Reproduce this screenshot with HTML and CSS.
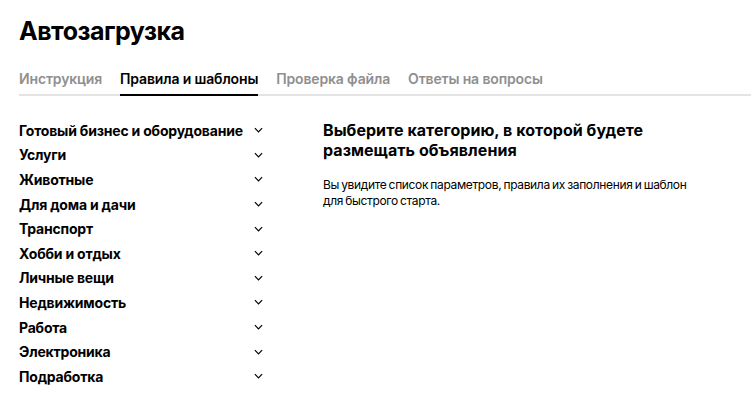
FILE: index.html
```html
<!DOCTYPE html>
<html lang="ru">
<head>
<meta charset="utf-8">
<link rel="stylesheet" href="styles.css">
</head>
<body>
<div class="page">
  <h1 class="title">Автозагрузка</h1>
  <nav class="tabs">
    <a class="tab">Инструкция</a>
    <a class="tab active">Правила и шаблоны</a>
    <a class="tab">Проверка файла</a>
    <a class="tab">Ответы на вопросы</a>
  </nav>
  <div class="content">
    <ul class="cats">
      <li class="cat"><span>Готовый бизнес и оборудование</span><svg class="chev" viewBox="0 0 10 6"><path d="M1 1l4 4 4-4"/></svg></li>
      <li class="cat"><span>Услуги</span><svg class="chev" viewBox="0 0 10 6"><path d="M1 1l4 4 4-4"/></svg></li>
      <li class="cat"><span>Животные</span><svg class="chev" viewBox="0 0 10 6"><path d="M1 1l4 4 4-4"/></svg></li>
      <li class="cat"><span>Для дома и дачи</span><svg class="chev" viewBox="0 0 10 6"><path d="M1 1l4 4 4-4"/></svg></li>
      <li class="cat"><span>Транспорт</span><svg class="chev" viewBox="0 0 10 6"><path d="M1 1l4 4 4-4"/></svg></li>
      <li class="cat"><span>Хобби и отдых</span><svg class="chev" viewBox="0 0 10 6"><path d="M1 1l4 4 4-4"/></svg></li>
      <li class="cat"><span>Личные вещи</span><svg class="chev" viewBox="0 0 10 6"><path d="M1 1l4 4 4-4"/></svg></li>
      <li class="cat"><span>Недвижимость</span><svg class="chev" viewBox="0 0 10 6"><path d="M1 1l4 4 4-4"/></svg></li>
      <li class="cat"><span>Работа</span><svg class="chev" viewBox="0 0 10 6"><path d="M1 1l4 4 4-4"/></svg></li>
      <li class="cat"><span>Электроника</span><svg class="chev" viewBox="0 0 10 6"><path d="M1 1l4 4 4-4"/></svg></li>
      <li class="cat"><span>Подработка</span><svg class="chev" viewBox="0 0 10 6"><path d="M1 1l4 4 4-4"/></svg></li>
    </ul>
    <section class="info">
      <h2 class="info-title">Выберите категорию, в которой будете размещать объявления</h2>
      <p class="info-text">Вы увидите список параметров, правила их заполнения и шаблон для быстрого старта.</p>
    </section>
  </div>
</div>
</body>
</html>
```
FILE: styles.css
```css
html, body {
  margin: 0;
  padding: 0;
  background: #fff;
}
body {
  font-family: Inter, "Noto Sans", "Liberation Sans", sans-serif;
  color: #000;
}
.page {
  padding: 16px 0 0 19px;
}
.title {
  margin: 0;
  font-size: 25px;
  line-height: 30px;
  font-weight: 700;
  letter-spacing: -0.5px;
}
.tabs {
  display: flex;
  gap: 18px;
  margin-top: 24px;
  border-bottom: 2px solid #e4e4e4;
}
.tab {
  font-size: 14px;
  font-weight: 600;
  color: #8f8f8f;
  line-height: 18px;
  padding-bottom: 6px;
  margin-bottom: -2px;
  border-bottom: 2px solid transparent;
  letter-spacing: -0.15px;
}
.tab.active {
  color: #000;
  border-bottom-color: #000;
}
.content {
  display: flex;
  margin-top: 22px;
}
.cats {
  list-style: none;
  margin: 0;
  padding: 0;
  width: 246px;
}
.cat {
  display: flex;
  align-items: center;
  justify-content: space-between;
  height: 24.6px;
  font-size: 14px;
  font-weight: 700;
  letter-spacing: -0.2px;
}
.chev {
  width: 9px;
  height: 6px;
  fill: none;
  stroke: #000;
  stroke-width: 1.3;
  margin-right: 2px;
}
.info {
  margin-left: 58px;
  width: 380px;
}
.info-title {
  margin: 2px 0 0;
  font-size: 16px;
  line-height: 20px;
  font-weight: 700;
  letter-spacing: 0.05px;
}
.info-text {
  margin: 17px 0 0;
  font-size: 12px;
  line-height: 16px;
  letter-spacing: -0.35px;
  word-spacing: -0.8px;
}
```
